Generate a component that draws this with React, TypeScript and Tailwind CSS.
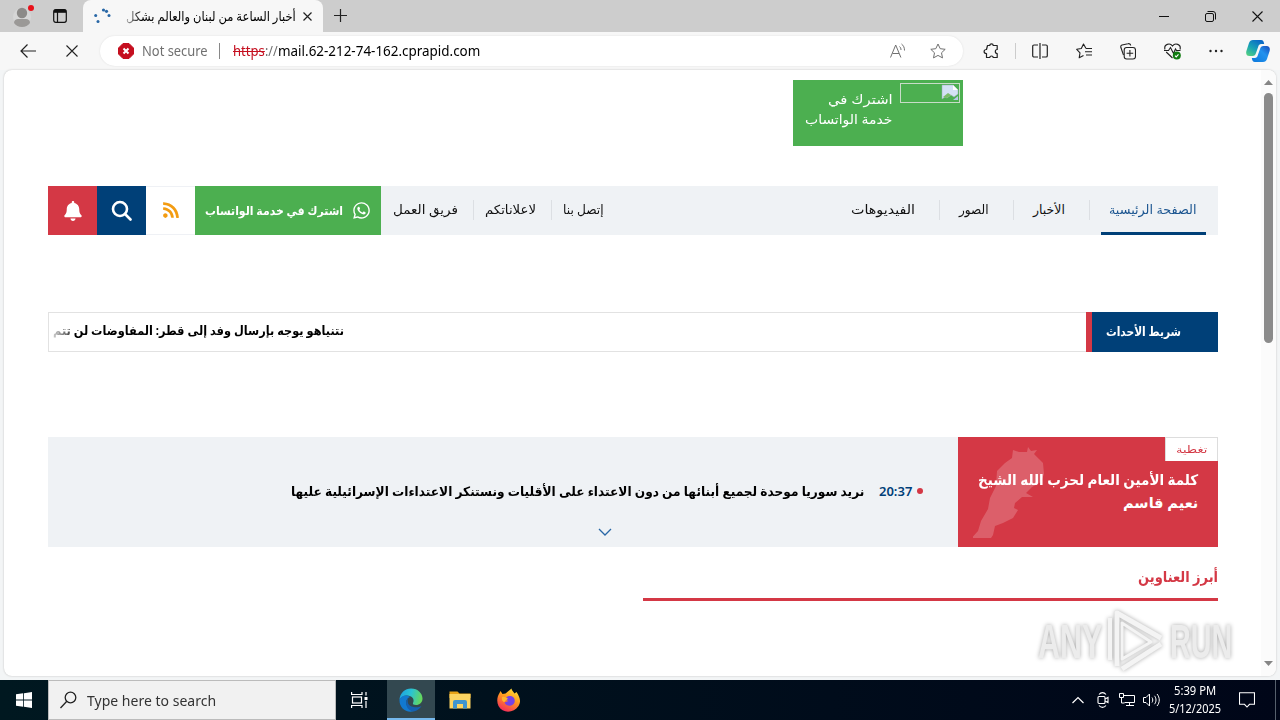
import React, { useLayoutEffect, useRef, useState } from 'react';
import { FaBell, FaRss, FaWhatsapp } from 'react-icons/fa';

interface FitProps {
    children: React.ReactNode;
    className?: string;
    rtl?: boolean;
}

// Single line of text squeezed or stretched to the width of its box
const Fit: React.FC<FitProps> = ({ children, className = '', rtl = false }) => {
    const box = useRef<HTMLSpanElement>(null);
    const line = useRef<HTMLSpanElement>(null);
    const [scale, setScale] = useState(1);

    useLayoutEffect(() => {
        if (box.current && line.current) {
            setScale(box.current.clientWidth / line.current.offsetWidth);
        }
    }, []);

    return (
        <span ref={box} dir="ltr" className={`block shrink-0 text-left whitespace-nowrap ${className}`}>
            <span
                ref={line}
                dir={rtl ? 'rtl' : 'ltr'}
                className="inline-block origin-left"
                style={{ transform: `scaleX(${scale})` }}
            >
                {children}
            </span>
        </span>
    );
};

const TabStrip = () => (
    <div className="flex h-8 items-stretch bg-[#cdcdcd]">
        <div className="flex w-[83px] items-center pl-[13px]">
            <svg width="22" height="28" viewBox="0 0 22 28">
                <circle cx="9" cy="15" r="9" fill="#d6d6d6" />
                <circle cx="9" cy="11" r="5.2" fill="#8c8a88" />
                <path d="M1 21c0-3 2-4 4-4h8c2 0 4 1 4 4-2 2.500-4.500 4-8 4s-6-1.500-8-4z" fill="#9b9997" />
                <circle cx="18" cy="6" r="3" fill="#e8111a" />
            </svg>
            <svg className="ml-[18px]" width="14" height="14" viewBox="0 0 14 14" fill="none" stroke="#111" strokeWidth="1.2">
                <rect x=".7" y=".7" width="12.600" height="12.600" rx="2" />
                <path d="M1 2.300h12" strokeWidth="3" />
                <path d="M4.500 3v10" />
            </svg>
        </div>
        <div className="flex w-[240px] items-center rounded-t-lg bg-[#f7f7f7]">
            <svg className="ml-[11px]" width="17" height="17" viewBox="0 0 17 17" fill="#2867a6">
                <circle cx="9.500" cy="2" r="1.600" />
                <circle cx="12.500" cy="3.300" r="1.600" />
                <circle cx="15" cy="7.500" r="1.500" />
                <circle cx="1.700" cy="7.500" r="1.500" />
                <circle cx="4" cy="13.500" r="1.500" />
            </svg>
            <div className="relative ml-[15px]">
                <Fit rtl className="w-[170px] text-[13px] leading-8 text-black">
                    أخبار الساعة من لبنان والعالم بشكل
                </Fit>
                <div className="absolute inset-y-0 left-0 w-4 bg-gradient-to-r from-[#f7f7f7]/70 to-transparent" />
            </div>
            <svg className="ml-[7px]" width="9" height="9" viewBox="0 0 9 9" stroke="#222" strokeWidth="1.200">
                <path d="M.5.5l8 8M8.500.5l-8 8" />
            </svg>
        </div>
        <svg className="mt-[9px] ml-[11px]" width="13" height="13" viewBox="0 0 13 13" stroke="#222" strokeWidth="1.200">
            <path d="M0 6.500h13M6.500 0v13" />
        </svg>
        <div className="ml-auto flex items-center gap-9 pr-[17px]">
            <svg width="10" height="11" viewBox="0 0 10 11" stroke="#111">
                <path d="M0 5.500h10" />
            </svg>
            <svg width="11" height="11" viewBox="0 0 11 11" fill="none" stroke="#111">
                <rect x=".5" y="2.500" width="8" height="8" rx="1.500" />
                <path d="M2.500.5h5.500a2.500 2.500 0 012.500 2.500v5.500" />
            </svg>
            <svg width="11" height="11" viewBox="0 0 11 11" stroke="#111" strokeWidth="1.100">
                <path d="M.5.5l10 10M10.500.5l-10 10" />
            </svg>
        </div>
    </div>
);

const starPath = 'M8 1l2.200 4.700 5 .6-3.700 3.500 1 5.100L8 12.400l-4.500 2.500 1-5.100L.8 6.300l5-.6z';

const AddressBar = () => (
    <div className="flex h-[38px] items-center bg-[#f7f7f7]">
        <svg className="ml-5" width="16" height="14" viewBox="0 0 16 14" fill="none" stroke="#222" strokeWidth="1.200">
            <path d="M16 7H1M7.500.5L1 7l6.500 6.500" />
        </svg>
        <svg className="ml-[30px]" width="12" height="12" viewBox="0 0 12 12" stroke="#222" strokeWidth="1.100">
            <path d="M.5.5l11 11M11.500.5l-11 11" />
        </svg>
        <div className="ml-[22px] flex h-[30px] w-[863px] items-center rounded-full bg-white pl-[18px] shadow-[0_0_2px_#ddd]">
            <svg width="16" height="16" viewBox="0 0 16 16">
                <path d="M5 .5h6L15.500 5v6L11 15.500H5L.5 11V5z" fill="#c50f1f" stroke="#c50f1f" strokeLinejoin="round" />
                <path d="M5.500 5.500l5 5M10.500 5.500l-5 5" stroke="#fff" strokeWidth="2" />
            </svg>
            <Fit className="ml-2 w-[66px] text-[13.500px] text-[#707070]">Not secure</Fit>
            <div className="ml-[11px] h-4 w-px bg-[#888]" />
            <div className="ml-[13px] flex text-[13.500px]">
                <Fit className="w-[32px] text-[#c50f1f]">
                    <span className="line-through">https</span>
                </Fit>
                <Fit className="w-[13px] text-[#707070]">://</Fit>
                <Fit className="w-[202px] text-black">mail.62-212-74-162.cprapid.com</Fit>
            </div>
            <svg className="ml-[410px]" width="16" height="16" viewBox="0 0 16 16" fill="none" stroke="#707070">
                <path d="M.5 14.500L5.700 2l5.200 12.500M2.500 10.500h6.500M9.500 3.500c1 .8 1.500 2 1.500 3.500M11.500 1c2 1.500 3 3.500 3 6.500" />
            </svg>
            <svg className="ml-[24px]" width="16" height="16" viewBox="0 0 16 16" fill="none" stroke="#707070" strokeLinejoin="round">
                <path d={starPath} />
            </svg>
        </div>
        <svg className="ml-[20px]" width="17" height="17" viewBox="0 0 17 17" fill="none" stroke="#222" strokeWidth="1.200" strokeLinejoin="round">
            <path d="M4.500 2.500h2.300c0-2.300 3.400-2.300 3.400 0h4v4c-2.500 0-2.500 4 0 4v4h-4c0-2-3.400-2-3.400 0H3.500v-4C.3 10.500.3 6.500 3.500 6.500z" />
        </svg>
        <div className="ml-[15px] h-4 w-px bg-[#ccc]" />
        <svg className="ml-[16px]" width="16" height="16" viewBox="0 0 16 16" fill="none" stroke="#222" strokeWidth="1.200">
            <path d="M6 2H2a1.300 1.300 0 00-1.300 1.300v9.400A1.300 1.300 0 002 14h4M10 2h4a1.300 1.300 0 011.300 1.300v9.400A1.300 1.300 0 0114 14h-4M8 0v16" />
        </svg>
        <svg className="ml-[28px]" width="17" height="16" viewBox="0 0 17 16" fill="none" stroke="#222" strokeWidth="1.100" strokeLinejoin="round">
            <path d="M10 5.500L7.500 1 5.300 5.500l-4.600.8L4 9.800l-.8 5L7.500 12.500M10 5.500h6M9 8.800h7M10 12h6" />
        </svg>
        <svg className="ml-[27px]" width="16" height="17" viewBox="0 0 16 17" fill="none" stroke="#222" strokeWidth="1.100">
            <path d="M3.500 12L.8 4.300A2 2 0 012 2l6-1.300c1.500-.4 2.500.6 2.700 1.800M9.900 7v6.500M6.600 10.200h6.600" />
            <rect x="4.200" y="4.500" width="11.300" height="11.500" rx="2.500" />
        </svg>
        <svg className="ml-[28px]" width="17" height="17" viewBox="0 0 17 17" fill="none" stroke="#222" strokeWidth="1.100">
            <path d="M1 6.500C-.5 1 6-.5 8.500 3 11-.5 17.500 1 16 6.500M2.200 9l6.300 6M0 7.500h4.500l2-3 3 6 2-4.500 1 1.500h4" />
            <circle cx="12.800" cy="12.500" r="4" fill="#107c10" stroke="none" />
            <path d="M11 12.700l1.200 1.200 2.300-2.500" stroke="#fff" />
        </svg>
        <svg className="ml-[28px]" width="14" height="4" viewBox="0 0 14 4" fill="#222">
            <circle cx="1.500" cy="2" r="1.200" />
            <circle cx="7" cy="2" r="1.200" />
            <circle cx="12.500" cy="2" r="1.200" />
        </svg>
        <svg className="ml-[23px]" width="24" height="24" viewBox="0 0 24 24">
            <defs>
                <linearGradient id="cpA" x1="0" y1="1" x2=".7" y2="0">
                    <stop offset="0" stopColor="#5bd67a" />
                    <stop offset=".5" stopColor="#19a3b5" />
                    <stop offset="1" stopColor="#0b69c7" />
                </linearGradient>
                <linearGradient id="cpB" x1="1" y1="0" x2="0" y2="1">
                    <stop offset="0" stopColor="#1648b8" />
                    <stop offset=".4" stopColor="#2292ee" />
                    <stop offset="1" stopColor="#0c78db" />
                </linearGradient>
            </defs>
            <path d="M7 1h8c2.200 0 2.700 1.500 3.200 4h-3c-1.700 0-2.500 1-3 2.700L10 14c-.6 2-1.500 3-3.500 3H3.500C.5 17-.3 14.500.4 12L3 4c.7-2 2-3 4-3z" fill="url(#cpA)" />
            <path d="M17 23H9c-2.200 0-2.700-1.500-3.200-4h3c1.700 0 2.500-1 3-2.700L14 10c.6-2 1.500-3 3.500-3h3c3 0 3.800 2.500 3.100 5L21 20c-.7 2-2 3-4 3z" fill="url(#cpB)" />
        </svg>
    </div>
);

const Separator = ({ className = '' }: { className?: string }) => (
    <div className={`h-5 w-px shrink-0 bg-[#dcdfe3] ${className}`} />
);

const NavBar = () => (
    <nav className="mt-10 flex h-[49px] items-center bg-[#eff2f5] text-[12.500px] leading-[19px] text-[#111]">
        <div className="flex size-[49px] items-center justify-center bg-[#d43845]">
            <FaBell className="size-5 text-white" />
        </div>
        <div className="flex size-[49px] items-center justify-center bg-[#004078]">
            <svg width="21" height="21" viewBox="0 0 21 21" fill="none" stroke="#fff" strokeWidth="2.600">
                <circle cx="9" cy="9" r="7" />
                <path d="M14 14l5.500 5.500" strokeLinecap="round" />
            </svg>
        </div>
        <div className="flex size-[49px] items-center justify-center border-y border-[#eff1f5] bg-white pb-px">
            <FaRss className="size-[18px] text-[#f39c12]" />
        </div>
        <div className="flex h-full w-[186px] items-center bg-[#4caf50] pl-[10px] text-white">
            <Fit rtl className="w-[138px] pb-px text-[11.500px] font-bold">اشترك في خدمة الواتساب</Fit>
            <FaWhatsapp className="ml-[9px] size-[19px]" />
        </div>
        <Fit rtl className="ml-3 w-[65px] pb-0.5">فريق العمل</Fit>
        <Separator className="mb-0.5 ml-[15px]" />
        <Fit rtl className="ml-[11px] w-[51px] pb-0.5">لاعلاناتكم</Fit>
        <Separator className="mb-0.5 ml-[15px]" />
        <Fit rtl className="ml-[11px] w-[41px] pb-0.5">إتصل بنا</Fit>
        <Fit rtl className="ml-auto w-[64px] pb-0.5">الفيديوهات</Fit>
        <Separator className="mb-0.5 ml-6" />
        <Fit rtl className="ml-[19px] w-[30px] pb-0.5">الصور</Fit>
        <Separator className="mb-0.5 ml-6" />
        <Fit rtl className="ml-[19px] w-[32px] pb-0.5">الأخبار</Fit>
        <Separator className="mb-0.5 ml-6" />
        <div className="mr-3 ml-[11px] flex h-full w-[105px] items-center border-b-3 border-[#004078] pt-px pl-2 text-[#1b5590]">
            <Fit rtl className="w-[88px]">الصفحة الرئيسية</Fit>
        </div>
    </nav>
);

const Ticker = () => (
    <div className="mt-[77px] flex h-10">
        <div className="flex flex-1 items-center border border-r-0 border-[#e2e2e2] pb-0.5 pl-1">
            <div className="relative">
                <Fit rtl className="w-[291px] text-[12.500px] font-bold text-black">
                    نتنياهو يوجه بإرسال وفد إلى قطر: المفاوضات لن تتم
                </Fit>
                <div className="absolute inset-y-0 left-0 w-[20px] bg-gradient-to-r from-white/80 to-white/20" />
            </div>
        </div>
        <div className="flex w-[132px] items-center border-l-6 border-[#d43845] bg-[#004078] pl-[14px]">
            <Fit rtl className="w-[75px] text-[12.500px] font-bold text-white">شريط الأحداث</Fit>
        </div>
    </div>
);

const Coverage = () => (
    <div className="mt-[85px] flex h-[110px]">
        <div className="flex flex-1 flex-col bg-[#eff2f5]">
            <div className="mt-[42px] flex h-6 items-center pl-[243px]">
                <Fit rtl className="w-[573px] pt-px text-[13px] font-bold text-black">
                    نريد سوريا موحدة لجميع أبنائها من دون الاعتداء على الأقليات ونستنكر الاعتداءات الإسرائيلية عليها
                </Fit>
                <Fit className="ml-[15px] w-[33px] pt-px text-[13px] font-semibold text-[#004078]">20:37</Fit>
                <div className="ml-[5px] size-[6px] rounded-full bg-[#d43845]" />
            </div>
            <svg className="mt-[25px] ml-[550px]" width="14" height="8" viewBox="0 0 14 8" fill="none" stroke="#2867a6" strokeWidth="1.300">
                <path d="M1 1l6 6 6-6" />
            </svg>
        </div>
        <div className="relative w-[260px] bg-[#d43845]">
            <svg className="absolute top-[9px] left-[15px]" width="72" height="92" viewBox="0 0 72 92">
                <path
                    d="M40 4l6 2 8 0 1-5 3 4 6-1-3 4 5 5 4 4 1 11-3 8-9 5-6 6 7 4-11 0-7 6-1 5 4 2-5 8-10 5-8 3-2 9-4 6-8 2-7-3-4 0 8-9 3-10 7-12 2-11 6-12 1-15 8-8 7-5z"
                    fill="#fff"
                    opacity=".2"
                />
            </svg>
            <div className="ml-auto flex h-6 w-[53px] items-center border border-b-0 border-[#ddd] bg-white pl-[10px]">
                <Fit rtl className="w-[31px] text-[10px] text-[#d43845]">تغطية</Fit>
            </div>
            <div className="relative mt-[7px] ml-[20px] w-[220px] text-[14.500px] leading-[23px] font-bold text-white">
                <Fit rtl className="w-[220px]">كلمة الأمين العام لحزب الله الشيخ</Fit>
                <Fit rtl className="ml-auto w-[75px]">نعيم قاسم</Fit>
            </div>
        </div>
    </div>
);

const Scrollbar = () => (
    <div className="flex w-[15px] flex-col items-center bg-[#fbfbfb] pt-[10px] pb-[10px]">
        <svg width="9" height="5" viewBox="0 0 9 5" fill="#858585">
            <path d="M0 5L4.500 0 9 5z" />
        </svg>
        <div className="mt-2 h-[250px] w-[9px] rounded-full bg-[#8b8b8b]" />
        <svg className="mt-auto" width="9" height="5" viewBox="0 0 9 5" fill="#858585">
            <path d="M0 0l4.500 5L9 0z" />
        </svg>
    </div>
);

const Watermark = () => (
    <div className="absolute top-[608px] left-[1038px] flex items-center text-[#ececec] drop-shadow-[0_0_2px_#aaa]">
        <Fit className="w-[64px] font-['Liberation_Sans'] text-[49px] leading-[66px] font-bold">ANY</Fit>
        <svg className="ml-1" width="60" height="64" viewBox="0 0 60 64" fill="none" stroke="#f4f4f4" strokeWidth="5" strokeLinejoin="round">
            <path d="M16 14v36l29-17z" strokeWidth="3" />
            <path d="M11 57V4l44 25M16 60l39-25" />
            <path d="M4 9v42" strokeWidth="4" />
        </svg>
        <Fit className="ml-1 w-[62px] font-['Liberation_Sans'] text-[49px] leading-[66px] font-bold">RUN</Fit>
    </div>
);

const Taskbar = () => (
    <div className="flex h-10 items-center bg-gradient-to-r from-[#001820] to-[#000618]">
        <div className="flex w-12 justify-center">
            <svg width="16" height="16" viewBox="0 0 16 16" fill="#fff">
                <path d="M0 2.300L7.200 1.300v6.300H0zM8 1.200L16 0v7.600H8zM0 8.400h7.200v6.300L0 13.700zM8 8.400h8V16l-8-1.200z" />
            </svg>
        </div>
        <div className="flex h-full w-[288px] items-center border border-[#bbb] bg-[#f1f1f1] pl-[11px]">
            <svg width="17" height="18" viewBox="0 0 17 18" fill="none" stroke="#222" strokeWidth="1.300">
                <circle cx="10.500" cy="6.500" r="5.300" />
                <path d="M6.800 10.300L.5 17" />
            </svg>
            <Fit className="ml-[10px] w-[129px] text-[15px] text-[#333]">Type here to search</Fit>
        </div>
        <svg className="ml-[15px]" width="17" height="16" viewBox="0 0 17 16" fill="none" stroke="#fff" strokeWidth="1.200">
            <path d="M.6 0v2.500h10.400V0M.6 16v-2.500h10.400V16M15 0v3.500M15 9v7" />
            <rect x="1.500" y="5" width="9" height="6" />
            <path d="M13.500 6.500h3" strokeWidth="3" />
        </svg>
        <div className="ml-[19px] flex h-full w-12 items-center justify-center border-b-2 border-[#76b9ed] bg-[#334850] pt-[2px]">
            <svg width="24" height="24" viewBox="0 0 24 24">
                <defs>
                    <linearGradient id="edgeTop" x1="0" y1=".2" x2="1" y2=".4">
                        <stop offset="0" stopColor="#1ba1e2" />
                        <stop offset=".5" stopColor="#2bc3d2" />
                        <stop offset="1" stopColor="#66d85b" />
                    </linearGradient>
                </defs>
                <path d="M.5 11.500C1 5 6 .5 12 .5c7 0 11.500 5 11.500 10 0 4-3 6.500-6.500 6.500-2.500 0-3.500-1-3-2 1-1.500 1-5-2-6.500C7.500 6 2.500 8 .5 11.500z" fill="url(#edgeTop)" />
                <path d="M.5 11.500C2.500 7 8 6.500 11 9c-3 1-4.500 4-3.500 7.500 1 3.500 4.500 6 8 6.500-8 3-15.500-3-15-11.500z" fill="#1279cf" />
                <path d="M9.500 10c-2 3.500-.5 8 5 9 3.300.6 6 .1 8-1-1.500 2.500-4 4.500-7 5.300C8 24 4.500 14 9.500 10z" fill="#1560b0" />
            </svg>
        </div>
        <svg className="ml-[14px]" width="22" height="20" viewBox="0 0 22 20">
            <path d="M.5 1.500h8l2 2h11V8H.5z" fill="#e8a317" />
            <path d="M.5 4h21v14.500H.5z" fill="#fcd462" />
            <path d="M4 18.500V12q0-2 2-2h10q2 0 2 2v6.500h-4V14H8v4.500z" fill="#3e95d0" />
        </svg>
        <svg className="ml-[26px]" width="24" height="24" viewBox="0 0 24 24">
            <defs>
                <linearGradient id="foxFire" x1=".8" y1="0" x2=".3" y2="1">
                    <stop offset="0" stopColor="#ffe33a" />
                    <stop offset=".45" stopColor="#ff9a1e" />
                    <stop offset="1" stopColor="#f5295b" />
                </linearGradient>
            </defs>
            <path d="M2.500 5l1-2 2 3 3-.5L14.500.5c0 2 2 3 3 5l2-1.500c4 6 4.500 10 2 14-5 7.500-16 7.500-20 0C-.5 14 0 8.500 2.500 5z" fill="url(#foxFire)" />
            <path d="M7 11c2-1 3-3 5.500-3 4 0 6 3 5 6.500-1.200 4-8 4.500-10 0l4-1.500z" fill="#7542e5" />
            <path d="M5 9c2.500-1 4 .3 6 1.500-1 2-3 1.500-3.500 3.500-2 0-3-2.500-2.500-5z" fill="#ffb52d" />
        </svg>
        <div className="ml-auto flex h-full items-center text-white">
            <svg width="12" height="8" viewBox="0 0 12 8" fill="none" stroke="#fff" strokeWidth="1.200">
                <path d="M.5 7L6 1.500 11.500 7" />
            </svg>
            <svg className="ml-[13px]" width="12" height="16" viewBox="0 0 12 16" fill="none" stroke="#fff" strokeWidth="1.100">
                <rect x="1" y="4.500" width="7" height="7" rx="1" />
                <path d="M8 7l3-1.500v5L8 9M2 2.500c2-2.500 5-2.500 7 0M2 13.500c2 2.500 5 2.500 7 0" />
            </svg>
            <svg className="ml-[10px]" width="17" height="14" viewBox="0 0 17 14" fill="none" stroke="#fff">
                <path d="M5 2.500h10.500v7H5.500M10.500 9.500v3M7 12.500h8M2.500 7.500v2.500h3" />
                <path d="M.5.500h4v4h-4zM2.500 4.500v4" />
            </svg>
            <svg className="ml-[7px]" width="17" height="14" viewBox="0 0 17 14" fill="none" stroke="#fff">
                <path d="M.5 4.500h2.500L6.500 1v12L3 9.500H.5zM9 4.500c1 1.500 1 3.500 0 5M11.500 2.800c2 2.500 2 6 0 8.400M14 1c3 3.500 3 8.500 0 12" />
            </svg>
            <div className="ml-[9px] flex w-[52px] flex-col items-center text-[12px] leading-[18px]">
                <Fit className="w-[42px]">5:39 PM</Fit>
                <Fit className="w-[52px]">5/12/2025</Fit>
            </div>
            <svg className="ml-[18px]" width="16" height="16" viewBox="0 0 16 16" fill="none" stroke="#fff" strokeWidth="1.100">
                <path d="M.5.800h15v11.500H10.500L8 15l-2.500-2.700H.5z" />
            </svg>
            <div className="ml-[20px] h-full w-px bg-[#56606c]" />
            <div className="w-1" />
        </div>
    </div>
);

export default function App() {
    return (
        <div className="relative h-[720px] w-[1280px] overflow-hidden bg-[#f3f5f6] font-['Noto_Sans','DejaVu_Sans',sans-serif]">
            <TabStrip />
            <AddressBar />
            <div className="mx-1 mb-1 flex h-[606px] overflow-hidden rounded-lg bg-white shadow-[0_0_2px_#bbb]">
                <main className="w-[1257px] pt-[10px] pl-11">
                    <div className="w-[1170px]">
                        <div className="ml-[745px] flex h-[66px] w-[170px] bg-[#4caf50] pt-[3px] pl-3 text-white">
                            <div className="flex w-[88px] flex-col items-end pt-[6px] text-[13px] leading-5">
                                <Fit rtl className="w-[65px]">اشترك في</Fit>
                                <Fit rtl className="w-[88px]">خدمة الواتساب</Fit>
                            </div>
                            <div className="ml-[7px] flex h-5 w-[60px] justify-end border border-[#c8dcc8]">
                                <svg width="18" height="18" viewBox="0 0 18 18">
                                    <path d="M1 1h11l5 5v4l-4 3-3-2-4 3-2-1-3 2z" fill="#d4e1f5" stroke="#9aa8b8" strokeWidth=".5" />
                                    <path d="M12 1v5h5z" fill="#fff" />
                                    <path d="M2 13l5-4 3 2-4 3z" fill="#7bbd67" />
                                    <path d="M12 16l5-4v4z" fill="#b8c8e8" />
                                </svg>
                            </div>
                        </div>
                        <NavBar />
                        <Ticker />
                        <Coverage />
                        <section className="mt-[16px] ml-[595px] h-[38px] border-b-3 border-[#d43845]">
                            <Fit rtl className="ml-auto w-[80px] text-[15px] leading-[26px] font-bold text-[#d43845]">
                                أبرز العناوين
                            </Fit>
                        </section>
                    </div>
                </main>
                <Scrollbar />
            </div>
            <Taskbar />
            <Watermark />
        </div>
    );
}
